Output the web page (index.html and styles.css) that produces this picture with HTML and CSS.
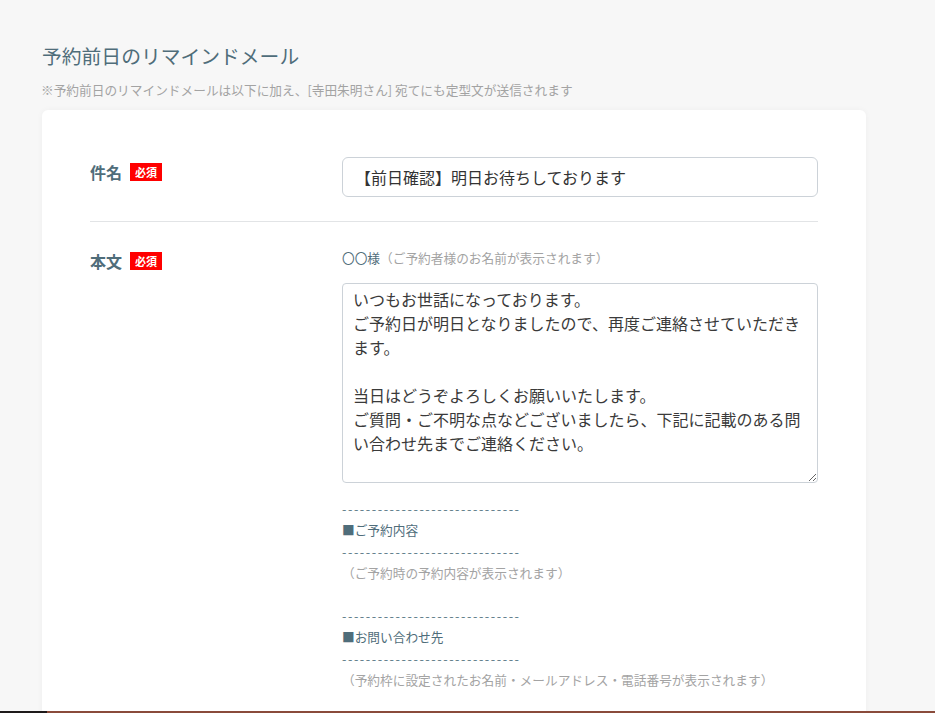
FILE: index.html
```html
<!DOCTYPE html>
<html lang="ja">
<head>
<meta charset="utf-8">
<title>予約前日のリマインドメール</title>
<link rel="stylesheet" href="styles.css">
</head>
<body>
<div class="page">
  <h2 class="title">予約前日のリマインドメール</h2>
  <p class="note">※予約前日のリマインドメールは以下に加え、[寺田朱明さん] 宛てにも定型文が送信されます</p>
  <div class="card">
    <div class="row row-first">
      <div class="label">件名<span class="badge">必須</span></div>
      <div class="field">
        <input class="input" type="text" value="【前日確認】明日お待ちしております">
      </div>
    </div>
    <div class="row row-second">
      <div class="label">本文<span class="badge">必須</span></div>
      <div class="field">
        <p class="hint"><span class="accent">〇〇様</span>（ご予約者様のお名前が表示されます）</p>
        <textarea class="textarea">いつもお世話になっております。
ご予約日が明日となりましたので、再度ご連絡させていただきます。

当日はどうぞよろしくお願いいたします。
ご質問・ご不明な点などございましたら、下記に記載のある問い合わせ先までご連絡ください。</textarea>
        <div class="fixed-text">
          <p class="accent dashes">------------------------------</p>
          <p class="accent">■ご予約内容</p>
          <p class="accent dashes">------------------------------</p>
          <p class="muted">（ご予約時の予約内容が表示されます）</p>
          <p class="blank">&nbsp;</p>
          <p class="accent dashes">------------------------------</p>
          <p class="accent">■お問い合わせ先</p>
          <p class="accent dashes">------------------------------</p>
          <p class="muted">（予約枠に設定されたお名前・メールアドレス・電話番号が表示されます）</p>
        </div>
      </div>
    </div>
  </div>
</div>
<div class="bottom-strip"></div>
</body>
</html>
```

FILE: styles.css
```css
html, body {
  margin: 0;
  padding: 0;
  background: #f7f7f7;
  font-family: "Noto Sans CJK JP", "Noto Sans", sans-serif;
  overflow: hidden;
}

.page {
  padding: 42px 69px 0 42px;
}

.title {
  margin: 0;
  font-size: 19.8px;
  line-height: 28px;
  font-weight: 400;
  color: #4f6d7a;
}

.note {
  margin: 11px 0 0 -1px;
  font-size: 12.7px;
  line-height: 18px;
  color: #a3a3a3;
}

.card {
  margin-top: 11px;
  background: #fff;
  border-radius: 6px;
  box-shadow: 0 0 6px rgba(0, 0, 0, 0.04);
  padding: 47px 48px 60px 48px;
}

.row {
  display: flex;
  align-items: flex-start;
}

.row-first {
  padding-bottom: 24px;
  border-bottom: 1px solid #e2e4e6;
}

.row-second {
  padding-top: 25px;
}

.label {
  width: 252px;
  flex: none;
  padding-top: 3px;
  font-size: 16px;
  line-height: 24px;
  font-weight: 700;
  color: #4f6d7a;
  display: flex;
  align-items: center;
}

.row-second .label {
  padding-top: 2px;
}

.badge {
  display: inline-block;
  margin-left: 8px;
  background: #ff0000;
  color: #fff;
  font-size: 11px;
  font-weight: 700;
  line-height: 18px;
  padding: 0 5px;
}

.field {
  flex: 1;
  min-width: 0;
}

.input {
  display: block;
  box-sizing: border-box;
  width: 100%;
  height: 40px;
  margin: 0;
  padding: 0 12px;
  border: 1px solid #ccd2d8;
  border-radius: 6px;
  font-family: inherit;
  font-size: 16px;
  color: #333;
  background: #fff;
  outline: none;
}

.hint {
  margin: 0 0 16px 0;
  font-size: 12.7px;
  line-height: 21px;
  color: #a3a3a3;
}

.accent {
  color: #4f6d7a;
}

.textarea {
  display: block;
  box-sizing: border-box;
  width: 100%;
  height: 200px;
  margin: -1px 0 0 0;
  padding: 3px 10px;
  border: 1px solid #ccd2d8;
  border-radius: 4px;
  font-family: inherit;
  font-size: 16px;
  line-height: 24px;
  color: #3a3a3a;
  background: #fff;
  resize: vertical;
  overflow: hidden;
  outline: none;
}

.fixed-text {
  margin-top: 15px;
  font-size: 12.7px;
  line-height: 21.4px;
}

.fixed-text p {
  margin: 0;
  white-space: nowrap;
}

.fixed-text .dashes {
  letter-spacing: 1.55px;
  color: #5f7d8a;
}

.muted {
  color: #a3a3a3;
}

.bottom-strip {
  position: fixed;
  left: 0;
  right: 0;
  bottom: 0;
  height: 2px;
  background: linear-gradient(to right, #1e1a1a 0, #1e1a1a 47px, #8a4b3b 47px, #8a4b3b 100%);
}
```
